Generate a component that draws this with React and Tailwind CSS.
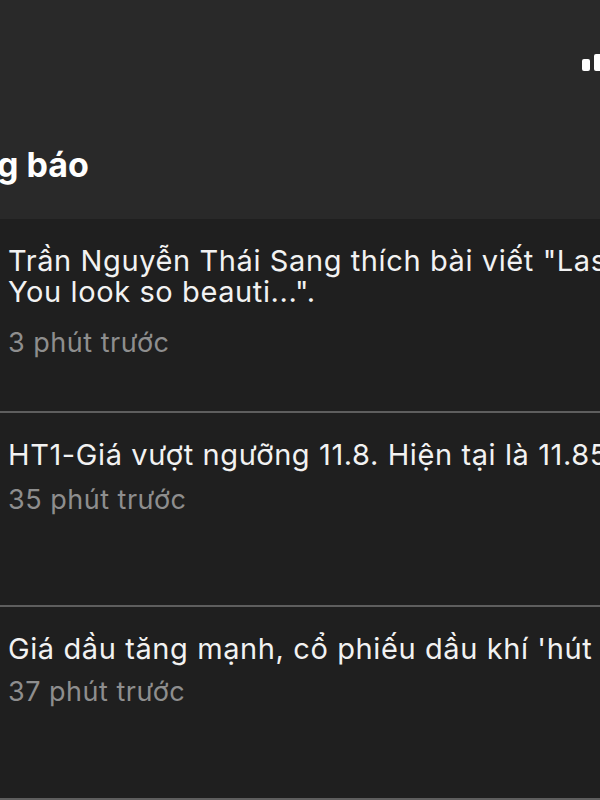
import React from "react";

const items = [
  {
    id: 1,
    lines: ['Trần Nguyễn Thái Sang thích bài viết "Last night', 'You look so beauti...".'],
    time: "3 phút trước",
    height: "h-[194px]",
    gap: "mt-[20px]",
  },
  {
    id: 2,
    lines: ["HT1-Giá vượt ngưỡng 11.8. Hiện tại là 11.85"],
    time: "35 phút trước",
    height: "h-[194px]",
    gap: "mt-[14px]",
  },
  {
    id: 3,
    lines: ["Giá dầu tăng mạnh, cổ phiếu dầu khí 'hút tiền'"],
    time: "37 phút trước",
    height: "h-[193px]",
    gap: "mt-[12px]",
  },
];

const App = () => {
  return (
    <div
      className="w-[600px] h-[800px] overflow-hidden bg-[#1f1f1f] text-[#f2f2f2]"
      style={{ fontFamily: "Inter, 'Noto Sans', sans-serif" }}
    >
      {/* Header */}
      <div className="h-[219px] bg-[#292929] relative">
        <div className="absolute right-0 top-[54px] flex items-end gap-[4px]">
          <div className="w-[8px] h-[12px] rounded-[2px] bg-white" />
          <div className="w-[6px] h-[17px] rounded-l-[2px] bg-white" />
        </div>
        <div className="pt-[144px] whitespace-nowrap overflow-hidden">
          <h1 className="ml-[-89px] text-[34px] leading-[42px] font-bold text-white">
            Thông báo
          </h1>
        </div>
      </div>

      {/* List */}
      <div className="flex flex-col">
        {items.map((item) => (
          <div
            key={item.id}
            className={`${item.height} pt-[26px] pl-[8px] border-b-2 border-[#5e5e5e] whitespace-nowrap overflow-hidden`}
          >
            {item.lines.map((line) => (
              <div key={line} className="text-[29px] leading-[31px] tracking-[0.6px]">
                {line}
              </div>
            ))}
            <div className={`${item.gap} text-[27px] leading-[31px] text-[#8e8e8e] tracking-[0.5px]`}>
              {item.time}
            </div>
          </div>
        ))}
      </div>
    </div>
  );
};

export default App;
